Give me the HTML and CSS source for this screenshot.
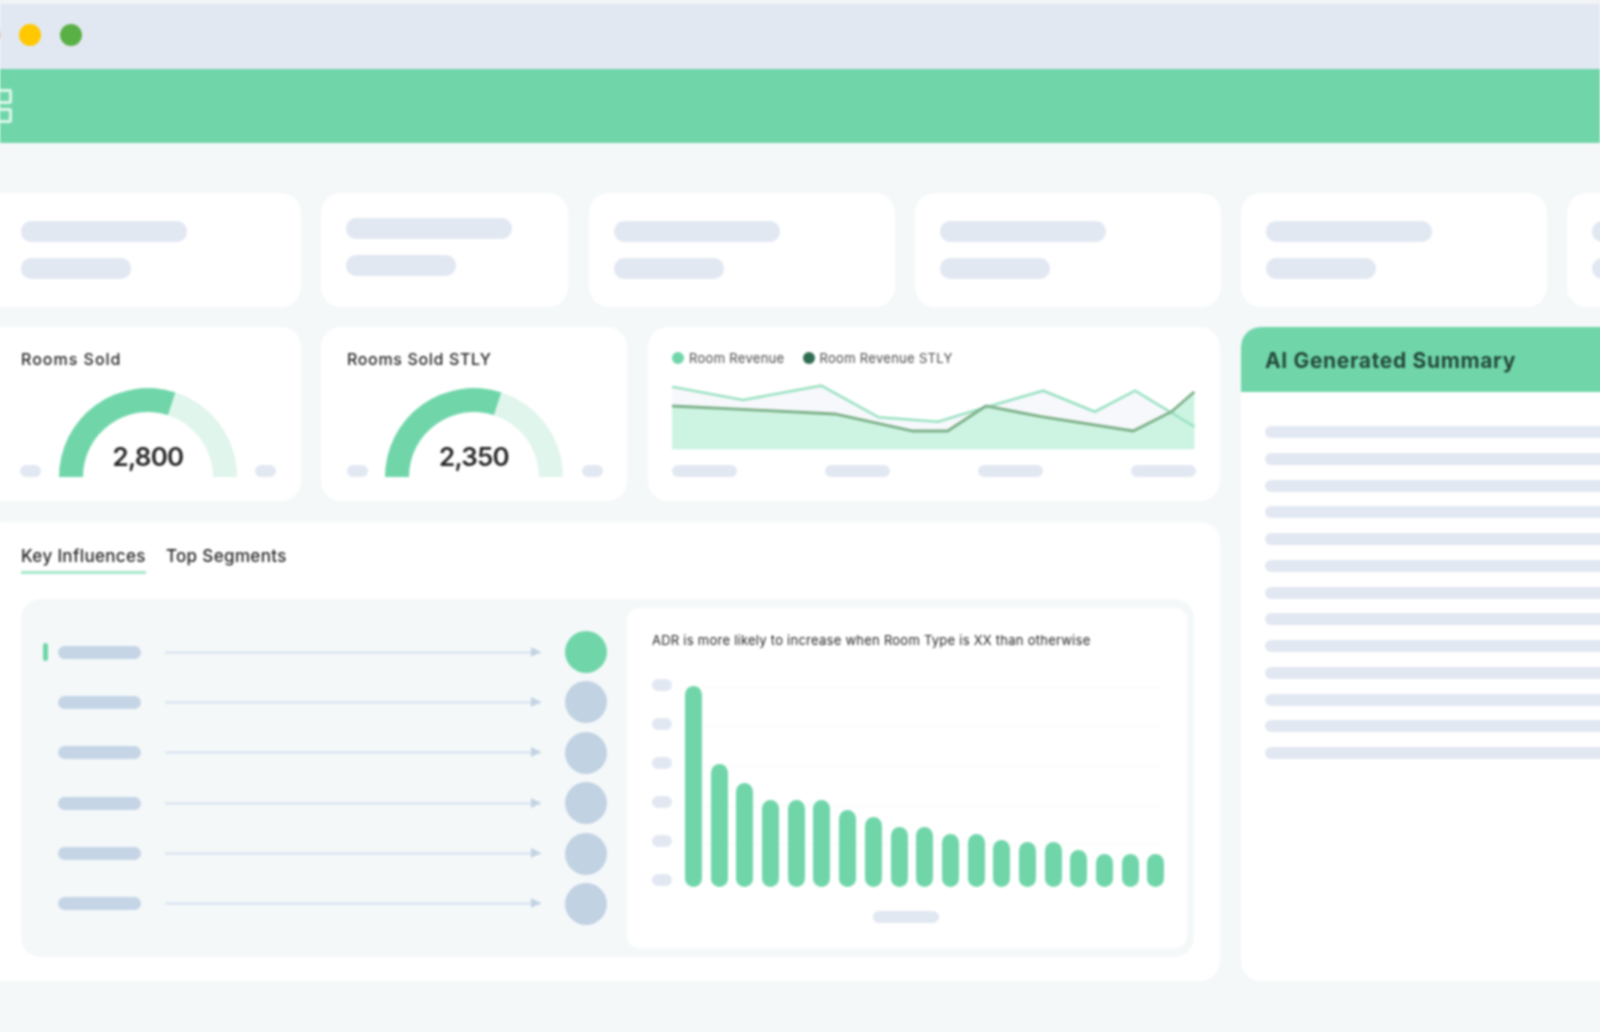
FILE: index.html
```html
<!DOCTYPE html>
<html lang="en">
<head>
  <meta charset="UTF-8">
  <title>AI Generated Summary</title>
  <link rel="stylesheet" href="styles.css">
</head>
<body>
  <div class="app">
    <div class="titlebar">
      <span class="dot red"></span>
      <span class="dot yellow"></span>
      <span class="dot green"></span>
    </div>
    <div class="topbar">
      <span class="tile"></span>
      <span class="tile"></span>
    </div>

    <div class="content">
      <div class="kpis">
        <div class="card kpi kpi-first"><div class="skel skel-long"></div><div class="skel skel-short"></div></div>
        <div class="card kpi kpi-narrow"><div class="skel skel-long"></div><div class="skel skel-short"></div></div>
        <div class="card kpi"><div class="skel skel-long"></div><div class="skel skel-short"></div></div>
        <div class="card kpi"><div class="skel skel-long"></div><div class="skel skel-short"></div></div>
        <div class="card kpi"><div class="skel skel-long"></div><div class="skel skel-short"></div></div>
        <div class="card kpi"><div class="skel skel-long"></div><div class="skel skel-short"></div></div>
      </div>

      <div class="lower">
        <div class="left">
          <div class="stats">
            <div class="card gauge-card gauge-first">
              <div class="card-title">Rooms Sold</div>
              <div class="gauge-row">
                <span class="skel skel-tick"></span>
                <div class="gauge">
                  <svg width="178" height="89" viewBox="0 0 178 89">
                    <path d="M0 89A89 89 0 0 1 116.5 4.4L109.1 27.2A65 65 0 0 0 24 89Z" fill="#70d6aa"/>
                    <path d="M116.5 4.4A89 89 0 0 1 178 89H154A65 65 0 0 0 109.1 27.2Z" fill="#e0f5ec"/>
                  </svg>
                  <span class="gauge-value">2,800</span>
                </div>
                <span class="skel skel-tick"></span>
              </div>
            </div>
            <div class="card gauge-card gauge-second">
              <div class="card-title">Rooms Sold STLY</div>
              <div class="gauge-row">
                <span class="skel skel-tick"></span>
                <div class="gauge">
                  <svg width="178" height="89" viewBox="0 0 178 89">
                    <path d="M0 89A89 89 0 0 1 116.5 4.4L109.1 27.2A65 65 0 0 0 24 89Z" fill="#70d6aa"/>
                    <path d="M116.5 4.4A89 89 0 0 1 178 89H154A65 65 0 0 0 109.1 27.2Z" fill="#e0f5ec"/>
                  </svg>
                  <span class="gauge-value">2,350</span>
                </div>
                <span class="skel skel-tick"></span>
              </div>
            </div>
            <div class="card revenue-card">
              <div class="legend">
                <span class="legend-dot"></span><span class="legend-label">Room Revenue</span>
                <span class="legend-dot legend-dark"></span><span class="legend-label">Room Revenue STLY</span>
              </div>
              <svg class="revenue-chart" width="523" height="70" viewBox="0 0 523 70">
                <path d="M0 6.7L70.8 20 149.3 5.7 206.7 37.3 266 41.7 313.8 27.3 371.2 10.7 422.9 31.7 463.1 10.7 522.4 46.7V69.3H0Z" fill="#f7f8fc"/>
                <path d="M0 26L70.8 29.3 162.7 34 241.1 51 275.6 51 313.8 26 369.3 36.7 461.2 51 499.5 31.7 522.4 11.7V69.3H0Z" fill="#cdf4e2"/>
                <path d="M0 6.7L70.8 20 149.3 5.7 206.7 37.3 266 41.7 313.8 27.3 371.2 10.7 422.9 31.7 463.1 10.7 522.4 46.7" fill="none" stroke="#9be2c3" stroke-width="2.6"/>
                <path d="M0 26L70.8 29.3 162.7 34 241.1 51 275.6 51 313.8 26 369.3 36.7 461.2 51 499.5 31.7 522.4 11.7" fill="none" stroke="#7cb088" stroke-width="2.8"/>
              </svg>
              <div class="xlabels">
                <span class="skel skel-x"></span>
                <span class="skel skel-x"></span>
                <span class="skel skel-x"></span>
                <span class="skel skel-x"></span>
              </div>
            </div>
          </div>

          <div class="card influences">
            <div class="tabs">
              <span class="tab active">Key Influences</span>
              <span class="tab">Top Segments</span>
            </div>
            <div class="inner">
              <div class="factors">
                <div class="factor"><span class="marker"></span><span class="factor-name"></span><span class="arrow"></span><span class="node node-on"></span></div>
                <div class="factor"><span class="marker off"></span><span class="factor-name"></span><span class="arrow"></span><span class="node"></span></div>
                <div class="factor"><span class="marker off"></span><span class="factor-name"></span><span class="arrow"></span><span class="node"></span></div>
                <div class="factor"><span class="marker off"></span><span class="factor-name"></span><span class="arrow"></span><span class="node"></span></div>
                <div class="factor"><span class="marker off"></span><span class="factor-name"></span><span class="arrow"></span><span class="node"></span></div>
                <div class="factor"><span class="marker off"></span><span class="factor-name"></span><span class="arrow"></span><span class="node"></span></div>
              </div>
              <div class="detail">
                <div class="detail-title">ADR is more likely to increase when Room Type is XX than otherwise</div>
                <div class="bar-chart">
                  <div class="yaxis">
                    <span class="skel skel-y"></span>
                    <span class="skel skel-y"></span>
                    <span class="skel skel-y"></span>
                    <span class="skel skel-y"></span>
                    <span class="skel skel-y"></span>
                    <span class="skel skel-y"></span>
                  </div>
                  <div class="bars">
                    <span class="bar" style="height: 201px"></span>
                    <span class="bar" style="height: 123px"></span>
                    <span class="bar" style="height: 104px"></span>
                    <span class="bar" style="height: 87px"></span>
                    <span class="bar" style="height: 87px"></span>
                    <span class="bar" style="height: 87px"></span>
                    <span class="bar" style="height: 77px"></span>
                    <span class="bar" style="height: 70px"></span>
                    <span class="bar" style="height: 60px"></span>
                    <span class="bar" style="height: 60px"></span>
                    <span class="bar" style="height: 53px"></span>
                    <span class="bar" style="height: 53px"></span>
                    <span class="bar" style="height: 47px"></span>
                    <span class="bar" style="height: 45px"></span>
                    <span class="bar" style="height: 45px"></span>
                    <span class="bar" style="height: 37px"></span>
                    <span class="bar" style="height: 33px"></span>
                    <span class="bar" style="height: 33px"></span>
                    <span class="bar" style="height: 33px"></span>
                  </div>
                </div>
                <div class="skel skel-caption"></div>
              </div>
            </div>
          </div>
        </div>

        <div class="card summary">
          <div class="summary-head">AI Generated Summary</div>
          <div class="summary-lines">
            <div class="line"></div><div class="line"></div><div class="line"></div><div class="line"></div>
            <div class="line"></div><div class="line"></div><div class="line"></div><div class="line"></div>
            <div class="line"></div><div class="line"></div><div class="line"></div><div class="line"></div>
            <div class="line"></div>
          </div>
        </div>
      </div>
    </div>
  </div>
</body>
</html>
```

FILE: styles.css
```css
html, body {
  margin: 0;
  height: 1032px;
  overflow: hidden;
  background: #f4f8f9;
}
body {
  font-family: Inter, "Noto Sans", sans-serif;
  color: #262626;
}
/* the shot is a soft upscale, so everything is a little blurred */
.app {
  height: 1032px;
  padding-top: 4px;
  box-sizing: border-box;
  background: linear-gradient(#f1f2f4 4px, #f4f8f9 4px);
  filter: blur(1px);
}

.titlebar {
  height: 65px;
  background: #e2e8f2;
  display: flex;
  align-items: center;
  gap: 19px;
  padding-bottom: 3px;
  box-sizing: border-box;
}
.dot {
  width: 22px;
  height: 22px;
  border-radius: 50%;
  flex: none;
}
.red {
  margin-left: -22px;
  background: #f5a55f;
}
.yellow {
  background: #ffc800;
}
.green {
  background: #59b045;
}

.topbar {
  height: 74px;
  background: #70d6aa;
  display: flex;
  flex-direction: column;
  justify-content: center;
  gap: 4px;
  box-sizing: border-box;
}
.tile {
  width: 15px;
  height: 15px;
  margin-left: -3px;
  border: 3px solid #dcf6ea;
  border-radius: 2px;
  box-sizing: border-box;
}

.content {
  width: 1720px;
  margin-left: -20px;
  padding-top: 50px;
}
.card {
  background: #fff;
  border-radius: 20px;
  box-sizing: border-box;
}
.skel {
  display: block;
  background: #e2e8f2;
  border-radius: 10px;
}

.kpis {
  display: flex;
  gap: 20.5px;
  height: 114px;
}
.kpi {
  width: 305.5px;
  flex: none;
  padding: 28px 0 0 25px;
}
.kpi-first {
  width: 320.5px;
  padding-left: 41px;
}
.kpi-narrow {
  width: 247px;
  margin-right: 0.5px;
  padding: 25px 0 0 25px;
}
.skel-long {
  width: 166px;
  height: 21px;
  margin-bottom: 16px;
}
.skel-short {
  width: 110px;
  height: 21px;
}

.lower {
  display: grid;
  grid-template-columns: 1240px 479px;
  gap: 21px;
  margin-top: 20px;
}
.left {
  display: flex;
  flex-direction: column;
  gap: 21px;
}
.stats {
  display: flex;
  gap: 20px;
  height: 174px;
}

.gauge-card {
  width: 306px;
  padding: 22px 24px 0 26px;
  flex: none;
}
.gauge-first {
  width: 321px;
  padding: 22px 25px 0 40px;
}
.gauge-first .card-title {
  margin-left: 1px;
  letter-spacing: 1px;
}
.gauge-second .gauge {
  margin-left: -2px;
}
.card-title {
  font-size: 16px;
  line-height: 20px;
  letter-spacing: 0.65px;
  font-weight: 500;
  margin-bottom: 19px;
}
.gauge-row {
  display: flex;
  justify-content: space-between;
  align-items: flex-end;
}
.skel-tick {
  width: 21px;
  height: 12px;
}
.gauge {
  position: relative;
  height: 89px;
}
.gauge svg {
  display: block;
}
.gauge-value {
  position: absolute;
  left: 0;
  right: 0;
  bottom: 4px;
  text-align: center;
  font-size: 26px;
  line-height: 32px;
  font-weight: 600;
  letter-spacing: -0.8px;
}

.revenue-card {
  flex: 1;
  margin-left: 1px;
  padding: 23px 24px 0 24px;
}
.legend {
  display: flex;
  align-items: center;
  height: 16px;
}
.legend-dot {
  width: 12px;
  height: 12px;
  border-radius: 50%;
  background: #70d6aa;
  margin: 0 5px 0 0;
}
.legend-dark {
  background: #2f6d52;
  margin-left: 18px;
}
.legend-label {
  font-size: 13px;
  letter-spacing: 0.3px;
  color: #484848;
}
.revenue-chart {
  display: block;
  margin-top: 14px;
}
.xlabels {
  display: flex;
  justify-content: space-between;
  margin-top: 15px;
}
.skel-x {
  width: 65px;
  height: 12px;
}

.influences {
  height: 459px;
  padding: 0 26px 0 41px;
}
.tabs {
  display: flex;
  gap: 20px;
  height: 77px;
  padding-top: 24px;
  box-sizing: border-box;
}
.tab {
  height: 25px;
  font-size: 17px;
  line-height: 20px;
  font-weight: 500;
  letter-spacing: 0.35px;
}
.tab.active {
  border-bottom: 3px solid #a6e8ca;
}

.inner {
  height: 358px;
  background: #f4f8f9;
  border-radius: 20px;
  display: flex;
  gap: 20px;
  padding: 9px 8px;
  box-sizing: border-box;
}
.factors {
  width: 578px;
  flex: none;
  box-sizing: border-box;
  padding: 23px 0 0 14px;
  display: flex;
  flex-direction: column;
  gap: 8.4px;
}
.factor {
  display: flex;
  align-items: center;
  height: 42px;
}
.marker {
  width: 5px;
  height: 18px;
  border-radius: 3px;
  background: #70d6aa;
  margin-right: 10px;
}
.marker.off {
  background: transparent;
}
.factor-name {
  width: 83px;
  height: 13px;
  border-radius: 7px;
  background: #c5d5e6;
  margin-right: 24px;
}
.arrow {
  position: relative;
  width: 376px;
  height: 3px;
  background: #dfe8f2;
  margin-right: 24px;
}
.arrow::after {
  content: "";
  position: absolute;
  right: 0;
  top: -4px;
  border-left: 10px solid #c3d3e4;
  border-top: 5.5px solid transparent;
  border-bottom: 5.5px solid transparent;
}
.node {
  width: 42px;
  height: 42px;
  border-radius: 50%;
  background: #c1d2e3;
}
.node-on {
  background: #70d6aa;
}

.detail {
  flex: 1;
  background: #fff;
  border-radius: 12px;
  margin-right: 2px;
  padding: 23px 23px 0 25px;
}
.detail-title {
  font-size: 13px;
  line-height: 18px;
  letter-spacing: 0.25px;
  margin-bottom: 31px;
}
.bar-chart {
  display: flex;
  height: 207px;
}
.yaxis {
  width: 33px;
  flex: none;
  display: flex;
  flex-direction: column;
  justify-content: space-between;
  margin: -1px 0 1px;
}
.skel-y {
  width: 20px;
  height: 12px;
}
.bars {
  flex: 1;
  display: flex;
  align-items: flex-end;
  gap: 8.7px;
  background: repeating-linear-gradient(#f7f9f9 0 1px, transparent 1px 39.2px) 0 7px / 476px 158px no-repeat;
}
.bar {
  width: 17px;
  flex: none;
  border-radius: 9px;
  background: #70d6aa;
}
.skel-caption {
  width: 66px;
  height: 12px;
  margin: 24px 0 0 221px;
}

.summary {
  height: 654px;
  overflow: hidden;
}
.summary-head {
  height: 65px;
  background: #70d6aa;
  padding-left: 24px;
  font-size: 21px;
  line-height: 68px;
  font-weight: 700;
  letter-spacing: 0.65px;
  color: #24493a;
}
.summary-lines {
  padding: 34px 0 0 24px;
  display: flex;
  flex-direction: column;
  gap: 14.75px;
}
.line {
  height: 12px;
  border-radius: 6px;
  background: #e2e8f2;
}
```
